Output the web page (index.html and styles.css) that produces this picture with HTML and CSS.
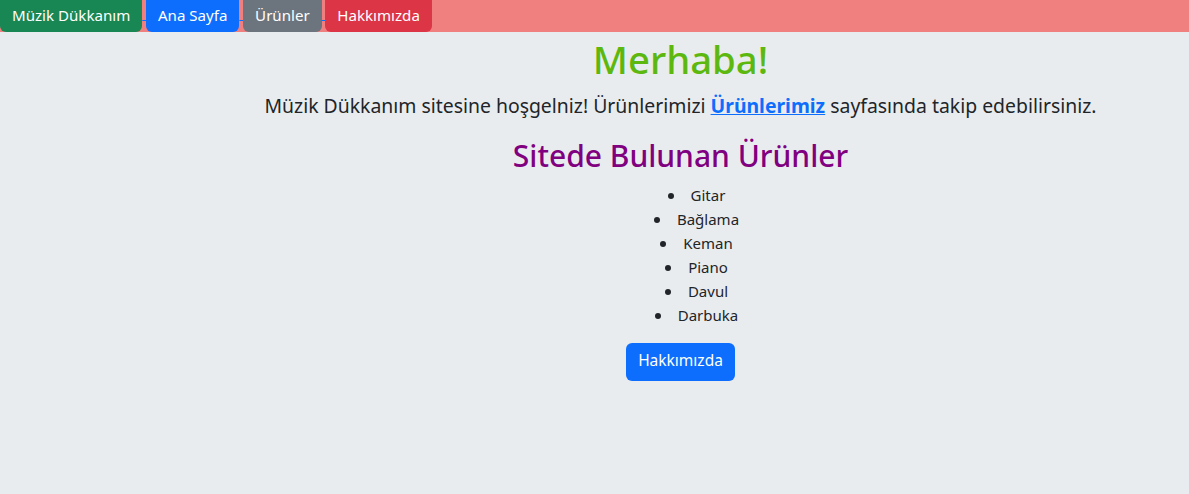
FILE: index.html
```html
<!DOCTYPE html>
<html lang="tr">
<head>
<meta charset="utf-8">
<title>Müzik Dükkanım</title>
<link rel="stylesheet" href="styles.css">
</head>
<body>
<nav class="topbar">
<a class="navlink" href="#"><span class="btn btn-success">Müzik Dükkanım</span> </a><a class="navlink" href="#"><span class="btn btn-primary">Ana Sayfa</span> </a><a class="navlink" href="#"><span class="btn btn-secondary">Ürünler</span> </a><a class="navlink" href="#"><span class="btn btn-danger">Hakkımızda</span></a>
</nav>
<main class="content">
<h1 class="title">Merhaba!</h1>
<p class="lead">Müzik Dükkanım sitesine hoşgelniz! Ürünlerimizi <a class="strong-link" href="#">Ürünlerimiz</a> sayfasında takip edebilirsiniz.</p>
<h2 class="subtitle">Sitede Bulunan Ürünler</h2>
<ul class="products">
<li>Gitar</li>
<li>Bağlama</li>
<li>Keman</li>
<li>Piano</li>
<li>Davul</li>
<li>Darbuka</li>
</ul>
<a class="btn btn-primary btn-about" href="#">Hakkımızda</a>
</main>
</body>
</html>
```
FILE: styles.css
```css
* { box-sizing: border-box; }
html, body { margin: 0; padding: 0; }
body {
  background: #e9ecef;
  color: #212529;
  font-family: "Noto Sans", "Liberation Sans", sans-serif;
  font-size: 16px;
  line-height: 1.5;
  height: 494px;
}
.topbar {
  background: #f08080;
  height: 32px;
  display: flex;
  align-items: flex-start;
}
.navlink {
  color: #0d6efd;
  text-decoration: underline;
  white-space: pre;
  font-size: 16px;
  word-spacing: -0.5px;
  line-height: 26px;
  display: inline-block;
  height: 32px;
}
.btn {
  display: inline-block;
  font-size: 15.5px;
  line-height: 1.5;
  color: #fff;
  text-decoration: none;
  border-radius: 6px;
  word-spacing: 0;
}
.topbar .btn {
  height: 32px;
  font-size: 15.1px;
  padding: 4px 12px 4px;
  border-radius: 0 0 6px 6px;
  vertical-align: top;
}
.btn-success { background: #198754; }
.btn-primary { background: #0d6efd; }
.btn-secondary { background: #6c757d; }
.btn-danger { background: #dc3545; }
.content {
  padding-left: 172px;
  text-align: center;
  display: flex;
  flex-direction: column;
  align-items: center;
}
.title {
  color: #5cb80e;
  font-size: 38.3px;
  font-weight: 500;
  line-height: 1.2;
  margin: 5px 0 0;
}
.lead {
  font-size: 19.4px;
  margin: 8px 0 0;
}
.strong-link {
  color: #0d6efd;
  font-weight: 700;
  text-decoration: underline;
}
.subtitle {
  color: #800080;
  font-size: 30px;
  font-weight: 500;
  line-height: 1.2;
  margin: 18px 0 0;
}
.products {
  list-style: none;
  margin: 9px 0 0;
  padding: 0 0 0 32px;
  font-size: 15px;
  line-height: 24px;
}
.products li { text-align: center; }
.products li::before {
  content: "";
  display: inline-block;
  width: 6px;
  height: 6px;
  border-radius: 50%;
  background: #212529;
  vertical-align: 2px;
  margin-right: 17px;
}
.btn-about {
  margin-top: 16px;
  padding: 6px 12px;
  height: 38px;
}
```
